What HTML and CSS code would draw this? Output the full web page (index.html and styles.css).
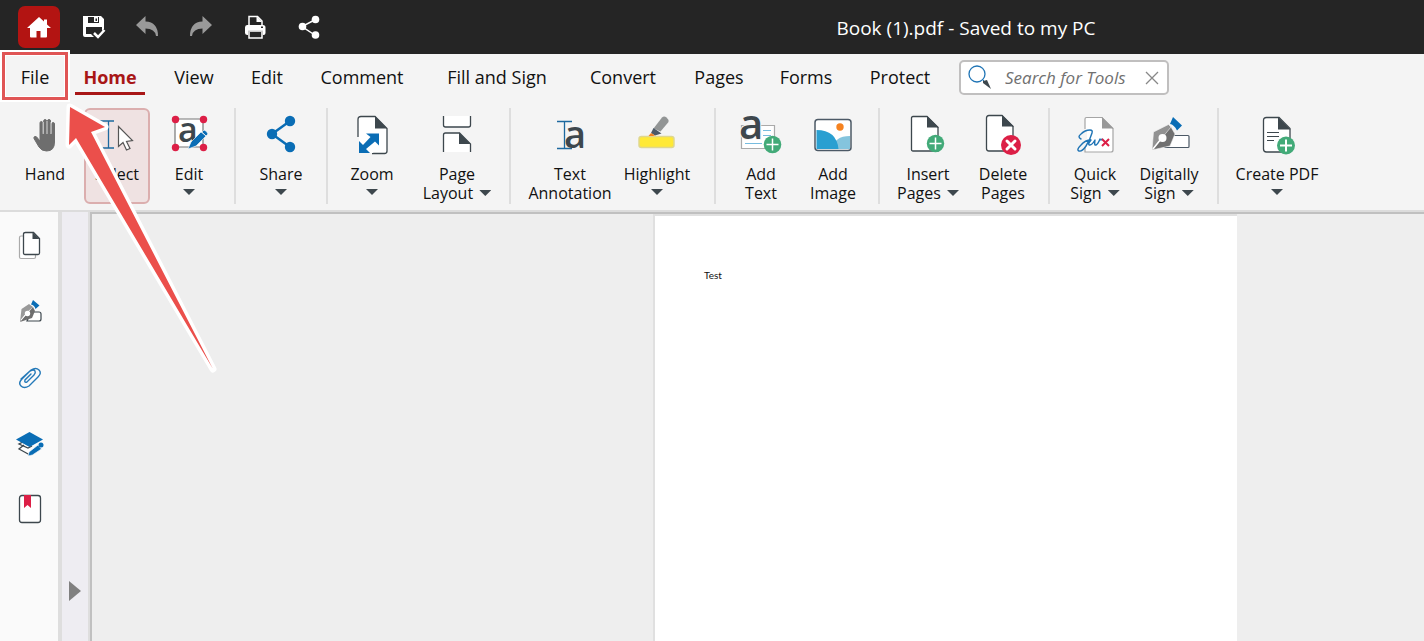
FILE: index.html
```html
<!DOCTYPE html>
<html lang="en">
<head>
  <meta charset="UTF-8" />
  <title>Book (1).pdf</title>
  <link rel="stylesheet" href="styles.css">
</head>
<body>

  <header class="titlebar">
    <div class="quick">
      <button class="quick-btn home" aria-label="Start page">
        <svg width="26" height="26" viewBox="0 0 26 26"><path fill="#fff" d="M13 3 1 14h3v8.500q0 1 1 1h5.500V17h4v6.500H20q1 0 1-1V14h4l-4-3.600V5.500h-3v2.100z"/></svg>
      </button>
      <button class="quick-btn" aria-label="Save">
        <svg width="26" height="26" viewBox="0 0 26 26" fill="none">
          <path fill="#fff" fill-rule="evenodd" d="M3 2h18l3 3v10l-2 2v-4H6v7h5l3 3H5q-2 0-2-2zM8 3v6h11V3z"/>
          <path fill="#fff" d="M14 3h4v5h-4z"/><path fill="#252525" d="M15.500 4.500h1.500v2.500h-1.500z"/>
          <path stroke="#fff" stroke-width="2.500" d="m14 19 4 4 6.500-7"/>
        </svg>
      </button>
      <button class="quick-btn" aria-label="Undo">
        <svg width="26" height="26" viewBox="0 0 26 26"><path fill="#999" d="M2 11 11.500 2v5.500Q24 8 24 22q-1 0-2 0Q21 14.500 11.500 14.500V20z"/></svg>
      </button>
      <button class="quick-btn" aria-label="Redo">
        <svg width="26" height="26" viewBox="0 0 26 26"><path fill="#999" d="M24 11 14.500 2v5.500Q2 8 2 22q1 0 2 0Q5 14.500 14.500 14.500V20z"/></svg>
      </button>
      <button class="quick-btn" aria-label="Print">
        <svg width="26" height="26" viewBox="0 0 26 26">
          <path fill="none" stroke="#fff" stroke-width="1.500" d="M7 12V2.500h8.500L20 7v5"/>
          <path fill="#fff" d="M14.500 2v6H20zM5 11h16q2.500 0 2.500 2.500V19q0 2-2 2H21v-4.500H6V21h-.5q-2.500 0-2.500-2v-5.500Q3 11 5 11z"/>
          <path fill="#252525" d="M19 12.500h2V14h-2z"/>
          <path fill="none" stroke="#fff" stroke-width="1.500" d="M5 17h17M7 18v6h13v-6"/>
        </svg>
      </button>
      <button class="quick-btn" aria-label="Share file">
        <svg width="26" height="26" viewBox="0 0 26 26"><path fill="none" stroke="#fff" stroke-width="1.500" d="M19.500 5.500 6 12.500l13.500 9"/><g fill="#fff"><circle cx="6.500" cy="12.500" r="3.800"/><circle cx="19.500" cy="5.500" r="3.800"/><circle cx="19.500" cy="21" r="3.800"/></g></svg>
      </button>
    </div>
    <div class="title">Book (1).pdf - Saved to my PC</div>
  </header>

  <div class="ribbon">
    <nav class="tabs">
      <button class="tab marked"><span>File</span></button>
      <button class="tab active"><span>Home</span></button>
      <button class="tab"><span>View</span></button>
      <button class="tab"><span>Edit</span></button>
      <button class="tab"><span>Comment</span></button>
      <button class="tab"><span>Fill and Sign</span></button>
      <button class="tab"><span>Convert</span></button>
      <button class="tab"><span>Pages</span></button>
      <button class="tab"><span>Forms</span></button>
      <button class="tab"><span>Protect</span></button>
      <div class="search">
        <svg width="26" height="26" viewBox="0 0 26 26"><circle cx="10" cy="9" r="8" fill="#fff" stroke="#1f74b5" stroke-width="1.300"/><path stroke="#1f74b5" d="m15.500 14.500 2 2"/><path fill="#3d474d" d="m16 16 4-1 4 9-8-6z"/></svg>
        <input type="text" placeholder="Search for Tools" aria-label="Search for Tools">
        <button class="clear" aria-label="Clear"><svg width="14" height="14" viewBox="0 0 14 14"><path stroke="#888" stroke-width="1.300" d="m1 1 12 12M13 1 1 13"/></svg></button>
      </div>
    </nav>

    <div class="tools">
      <div class="group g-select">
        <button class="tool">
          <svg width="48" height="44" viewBox="0 0 48 44"><g transform="translate(1 0)"><path fill="#6e6e6e" stroke="#6e6e6e" stroke-linejoin="round" d="M18 25V10q0-1.500 1.300-1.500T20.700 10v10h1V8q0-1.500 1.400-1.500T24.500 8v12h1V8q0-1.500 1.500-1.500T28.500 8v12.500h1.200V11q0-1.500 1.400-1.500T32.500 11v18q0 9-8 9-5 0-7.500-4l-5-8.500q-.6-1.700 1-2t2.500 1.500l2.500 3z"/><path stroke="#f4f4f4" stroke-width=".8" d="M21.200 9v12M25 8v13M29 9v12"/></g></svg>
          <span class="label">Hand</span>
        </button>
        <button class="tool selected">
          <svg width="48" height="44" viewBox="0 0 48 44"><path fill="none" stroke="#1d699f" stroke-width="1.300" d="M6 8h15M6 35h15M15.500 8v27"/><path fill="#fff" stroke="#555" stroke-width="1.200" d="M25.500 13.500v20l4.500-4 3.500 7.500 3.500-1.500-3.500-7 6-1z"/></svg>
          <span class="label">Select</span>
        </button>
        <button class="tool">
          <svg width="48" height="44" viewBox="0 0 48 44"><path fill="#fff" stroke="#777" stroke-width="1.200" d="M10 6h28v28H10z"/><text class="glyph" x="13" y="29" font-size="34">a</text><path fill="#0a6db5" stroke="#fff" stroke-width=".6" d="m23 36 3-7 10-10 5 4-10 10zM37 19l2-2q3 1 4 4l-2 2z"/><g fill="#dc1f46"><circle cx="10.500" cy="6.500" r="3.700"/><circle cx="38.500" cy="6.500" r="3.700"/><circle cx="10.500" cy="34.500" r="3.700"/><circle cx="38.500" cy="34.500" r="3.700"/></g></svg>
          <span class="label">Edit<i class="drop"></i></span>
        </button>
      </div>

      <div class="group g-share">
        <button class="tool">
          <svg width="48" height="44" viewBox="0 0 48 44"><path fill="none" stroke="#0a6db5" stroke-width="2.500" d="M33 8 15 21l18 13"/><g fill="#0a6db5"><circle cx="15" cy="21" r="5.200"/><circle cx="33" cy="8" r="5.200"/><circle cx="33" cy="34" r="5.200"/></g></svg>
          <span class="label">Share<i class="drop"></i></span>
        </button>
      </div>

      <div class="group g-view">
        <button class="tool">
          <svg width="48" height="44" viewBox="0 0 48 44"><path fill="#fff" stroke="#3d474d" stroke-width="1.300" d="M13 3.500h14l12 12V38q0 2.500-2.500 2.500H13q-3 0-3-3v-31q0-3 3-3z"/><path fill="#3d474d" d="M27 3v12.500h12z"/><path fill="#f4f4f4" d="M8 24h3v10l13 5v3H8z"/><path fill="#fff" d="M10.500 24h5l4-5h13v14l-8 7h-8z"/><path fill="#0a6db5" d="M18 20.500h13v12l-4-4-9 7.500 4 4H11v-12l4 4 7.500-8z"/></svg>
          <span class="label">Zoom<i class="drop"></i></span>
        </button>
        <button class="tool">
          <svg width="48" height="44" viewBox="0 0 48 44"><g fill="#fff" stroke="#3d474d" stroke-width="1.300"><path d="M10.500 3v9q0 2 2 2h23q2 0 2-2V3"/><path d="M10.500 39V22q0-2 2-2h14l11 11v8"/></g><path fill="#3d474d" d="M26 19.500V31h11.500z"/></svg>
          <span class="label">Page<br>Layout <i class="drop beside"></i></span>
        </button>
      </div>

      <div class="group g-note">
        <button class="tool">
          <svg width="48" height="44" viewBox="0 0 48 44"><path stroke="#1d699f" stroke-width="1.300" d="M11 8.500h15M11 35.500h15M18.500 8.500v27"/><text class="glyph" x="18" y="35" font-size="38">a</text></svg>
          <span class="label">Text<br>Annotation</span>
        </button>
        <button class="tool">
          <svg width="48" height="44" viewBox="0 0 48 44"><rect x="6" y="23.500" width="35" height="11" rx="2.500" fill="#ffe936" stroke="#dfd78e" stroke-width="1.500"/><path fill="#929595" d="M20.500 15.500 29 4.500q2-2 4.500 0t2 4.500l-8 9.500z"/><path fill="#4c5966" d="m20.500 15 8 5.500-6.500 2-4-2.500z"/><path fill="#f58220" d="m18 20 4 2.500-2 .5h-4.500z"/></svg>
          <span class="label">Highlight<i class="drop"></i></span>
        </button>
      </div>

      <div class="group g-add">
        <button class="tool">
          <svg width="48" height="44" viewBox="0 0 48 44"><path fill="#fff" stroke="#aaa" stroke-width="1.200" d="M4.500 12.500h33v23h-33z"/><path stroke="#77bcdf" stroke-width="1.200" d="M26 17.500h8M26 22.500h8M8 30.500h17"/><text class="glyph" x="2" y="26" font-size="42" stroke="#f4f4f4" stroke-width="2" paint-order="stroke">a</text><circle cx="35.500" cy="31.500" r="8.800" fill="#42aa78"/><path stroke="#fff" stroke-width="1.500" d="M29.500 31.500h12M35.500 25.500v12"/></svg>
          <span class="label">Add<br>Text</span>
        </button>
        <button class="tool">
          <svg width="48" height="44" viewBox="0 0 48 44"><rect x="6" y="6.500" width="36" height="31" rx="3" fill="#fff" stroke="#4c5966" stroke-width="1.500"/><path fill="#84c4dd" d="M24 36q1-13 17-13v13z"/><path fill="#299fd1" d="M7.500 17q20 0 22 19h-22z"/><circle cx="31" cy="14" r="3.700" fill="#f58220"/></svg>
          <span class="label">Add<br>Image</span>
        </button>
      </div>

      <div class="group g-pages">
        <button class="tool">
          <svg width="48" height="44" viewBox="0 0 48 44"><path fill="#fff" stroke="#3d474d" stroke-width="1.300" d="M9 3.500h14l11 11V38H9q-1.500 0-1.500-1.500V5q0-1.500 1.500-1.500z"/><path fill="#3d474d" d="M23 3v11.500h12z"/><circle cx="31.500" cy="30.500" r="8.700" fill="#42aa78"/><path stroke="#fff" stroke-width="1.500" d="M25.500 30.500h12M31.500 24.500v12"/></svg>
          <span class="label">Insert<br>Pages <i class="drop beside"></i></span>
        </button>
        <button class="tool">
          <svg width="48" height="44" viewBox="0 0 48 44"><path fill="#fff" stroke="#3d474d" stroke-width="1.300" d="M10 2.500h13l11 11V38H10q-2.500 0-2.500-2.500V5q0-2.500 2.500-2.500z"/><path fill="#3d474d" d="M23 2v11.500h12z"/><circle cx="32" cy="32" r="10" fill="#dc1f46"/><path stroke="#fff" stroke-width="3" stroke-linecap="round" d="m28 28 8 8M36 28l-8 8"/></svg>
          <span class="label">Delete<br>Pages</span>
        </button>
      </div>

      <div class="group g-sign">
        <button class="tool">
          <svg width="48" height="44" viewBox="0 0 48 44"><path fill="#fff" stroke="#a5a5a5" stroke-width="1.200" d="M14 39V6q0-1.500 1.500-1.500H31l11 11V37q0 2-2 2z"/><path fill="#999" d="M31 4v11.500h11.500z"/><path fill="#f4f4f4" d="M12 16h4v18h-4z"/><path fill="none" stroke="#1f74b5" stroke-width="1.400" stroke-linecap="round" stroke-linejoin="round" d="M10 26q-4-2 0-5 4-4 9-4 3 0 2 3-2 7-6 13-4 6-7 5t2-6q4-5 10-5-4 5-1 5 2 0 5-5-1 6 1 5t4-6q1 2 2 0"/><path stroke="#dc1f46" stroke-width="2" d="m31 26 7 7M38 26l-7 7"/></svg>
          <span class="label">Quick<br>Sign <i class="drop beside"></i></span>
        </button>
        <button class="tool">
          <svg width="48" height="44" viewBox="0 0 48 44"><path fill="#fff" stroke="#4c5966" stroke-width="1.200" d="M22 22.500h21q1 0 1 1v10q0 1-1 1H20z"/><path fill="#929292" stroke="#f4f4f4" stroke-width=".6" d="M7 37 8.500 19l15-7.500L27 15l-9 9z"/><path fill="#707070" stroke="#f4f4f4" stroke-width=".6" d="m7 37 19-23 4 7-5 12z"/><path stroke="#fff" stroke-width="1.500" d="m8 36 8-10"/><circle cx="17.500" cy="25" r="4" fill="#fff"/><path fill="#0a6db5" d="m28 4 9 8.500-5 5q-3-6-7-6.500z"/></svg>
          <span class="label">Digitally<br>Sign <i class="drop beside"></i></span>
        </button>
      </div>

      <div class="group g-create">
        <button class="tool">
          <svg width="48" height="44" viewBox="0 0 48 44"><path fill="#fff" stroke="#3d474d" stroke-width="1.300" d="M13.500 4.500H26l11 11V39H13.500q-3 0-3-3V7.500q0-3 3-3z"/><path fill="#3d474d" d="M25 4v12.500h12.500z"/><path stroke="#3d474d" stroke-width="1.200" d="M14 19.500h12M14 23.500h12M14 27.500h7"/><circle cx="33" cy="32.500" r="9" fill="#42aa78"/><path stroke="#fff" stroke-width="2" d="M27 32.500h12M33 26.500v12"/></svg>
          <span class="label">Create PDF<i class="drop"></i></span>
        </button>
      </div>
    </div>
  </div>

  <main class="workspace">
    <aside class="sidebar">
      <button aria-label="Page thumbnails"><svg width="30" height="32" viewBox="0 0 30 32"><path fill="#fff" stroke="#aaa" stroke-width="1.200" d="M8 6H6Q4.500 6 4.500 7.500V27q0 1.500 1.500 1.500h13q1.500 0 1.500-1.500v-2"/><path fill="#fff" stroke="#3d474d" stroke-width="1.300" d="M10.500 2.500h8l6 6V23q0 1.500-1.500 1.500H10Q8.500 24.500 8.500 23V4q0-1.500 2-1.500z"/><path fill="#3d474d" d="M17.500 2v7h7z"/></svg></button>
      <button aria-label="Signatures"><svg width="30" height="32" viewBox="0 0 30 32"><path fill="#fff" stroke="#3d474d" stroke-width="1.200" d="M16 16h8q2 0 2 2v5q0 2-2 2H12z"/><path fill="#999" d="M5 26 6.500 13 14 8l4 3-7 6z"/><path fill="#6e6e6e" d="m5 26 13-15 2 4-3 7z"/><path stroke="#fff" d="m6 24 5-6"/><circle cx="12.500" cy="17.500" r="2.700" fill="#fff"/><path fill="#0a6db5" d="m18 4 6.500 5.500-4 3.500q-1-4-4.500-4.500z"/></svg></button>
      <button aria-label="Attachments"><svg width="30" height="32" viewBox="0 0 30 32"><path fill="none" stroke="#2479b8" stroke-width="1.400" stroke-linecap="round" d="m6 17 10-9q5-3 8 0t-1 7l-9 9q-5 3-8 0t1-7l8-8q4-2 5 0t-1 4l-7 7q-3 1-2-2l6-6"/></svg></button>
      <button aria-label="Edit layers"><svg width="30" height="32" viewBox="0 0 30 32"><path fill="#fff" stroke="#3d474d" stroke-width="1.300" d="m12 12-8 4 9 4 4-2M9 17l-5 4 11 6 4-3"/><path fill="#0a6db5" d="M1 11.500 14.500 4 28 11.500 14.500 19z"/><path fill="#0a6db5" stroke="#fafafa" stroke-width=".7" d="m13 28 1-4 9-7 3.500 4-9 6z"/><circle cx="26" cy="17" r="2.500" fill="#0a6db5"/></svg></button>
      <button aria-label="Bookmarks"><svg width="30" height="32" viewBox="0 0 30 32"><rect x="4.500" y="1.500" width="21" height="27" rx="2.500" fill="#fff" stroke="#3d474d" stroke-width="1.300"/><path fill="#dc1f46" d="M9 1h7v13l-3.500-3L9 14z"/></svg></button>
    </aside>
    <div class="splitter"><button class="expand" aria-label="Expand panel"></button></div>
    <section class="canvas">
      <article class="page">Test</article>
    </section>
  </main>

  <svg class="pointer" width="160" height="280" viewBox="0 0 160 280"><path fill="#eb4f4b" stroke="#fff" stroke-width="7" stroke-linejoin="round" paint-order="stroke" d="m10 7 35 20-14 5 122 237L16 38 9 45z"/></svg>

</body>
</html>
```
FILE: styles.css
```css
*,
*::after {
  box-sizing: border-box;
}

body {
  display: flex;
  flex-direction: column;
  position: relative;
  height: 100vh;
  margin: 0;
  overflow: hidden;
  font-family: "Open Sans", "Noto Sans", sans-serif;
  color: #111;
  background-color: #eee;
}

button {
  padding: 0;
  border: none;
  background: none;
  font-family: inherit;
  color: inherit;
  cursor: pointer;
}

svg {
  display: block;
  overflow: visible;
}

/* title bar */
.titlebar {
  display: flex;
  align-items: center;
  height: 54px;
  flex-shrink: 0;
  padding-left: 12px;
  background-color: #252525;
}

.quick {
  display: grid;
  grid-template-columns: repeat(6, 54px);
  justify-items: center;
}

.quick-btn {
  display: flex;
  align-items: center;
  justify-content: center;
  width: 42px;
  height: 42px;
  border-radius: 7px;
}

.home {
  background-color: #b31412;
}

.title {
  flex: 1;
  padding: 2px 0 0 172px;
  text-align: center;
  font-size: 19px;
  color: #fff;
  white-space: nowrap;
}

/* ribbon */
.ribbon {
  flex-shrink: 0;
  background-color: #f4f4f4;
  border-bottom: 2px solid #dcdcdc;
}

.tabs {
  display: grid;
  grid-template-columns: 68px 82px 86px 60px 130px 140px 112px 80px 94px 94px 210px;
  height: 50px;
  padding-left: 1px;
}

.tab {
  display: flex;
  justify-content: center;
  height: 41px;
  font-size: 18px;
  white-space: nowrap;
}

.tab span {
  display: flex;
  align-items: center;
  padding: 8px 8px 0;
  border-bottom: 3px solid transparent;
}

.tab.active span {
  font-weight: bold;
  color: #a81616;
  border-color: #a81616;
}

.tab.marked {
  position: relative;
}

.tab.marked::after {
  content: "";
  position: absolute;
  top: -2px;
  left: 1px;
  width: 66px;
  height: 48px;
  border: 3px solid #e05555;
  box-shadow: 0 0 0 2px #fff, inset 0 0 0 1px #fff;
}

.search {
  display: flex;
  align-items: center;
  height: 35px;
  margin: 6px 0 0 12px;
  width: 210px;
  padding: 0 8px 0 6px;
  border: 2px solid #c0bfbf;
  border-radius: 5px;
  background-color: #fff;
}

.search input {
  flex: 1;
  min-width: 0;
  padding: 0 0 0 12px;
  border: none;
  outline: none;
  background: none;
  font-family: inherit;
  font-size: 17px;
  font-style: italic;
}

.search input::placeholder {
  color: #707070;
}

/* tools */
.tools {
  display: flex;
  padding: 4px 0 6px;
}

.group {
  display: grid;
  border-right: 2px solid #dedede;
}

.g-select {
  grid-template-columns: 78px 66px 78px;
  padding: 0 6px;
}

.g-share {
  grid-template-columns: 90px;
}

.g-view {
  grid-template-columns: 88px 82px;
  padding-right: 11px;
}

.g-note {
  grid-template-columns: 94px 80px;
  padding: 0 17px 0 12px;
}

.g-add {
  grid-template-columns: 72px 72px;
  padding: 0 9px;
}

.g-pages {
  grid-template-columns: 76px 74px;
  padding: 0 8px 0 10px;
}

.g-sign {
  grid-template-columns: 72px 76px;
  padding: 0 10px 0 9px;
}

.g-create {
  grid-template-columns: 116px;
  border-right: none;
}

.tool {
  display: flex;
  flex-direction: column;
  align-items: center;
  height: 96px;
  padding-top: 3px;
  border: 2px solid transparent;
  border-radius: 6px;
}

.tool.selected {
  background-color: #efe2e2;
  border-color: #dbaeae;
}

.label {
  margin-top: 8px;
  font-size: 16px;
  line-height: 19px;
  text-align: center;
  white-space: nowrap;
}

.drop {
  display: block;
  width: 12px;
  height: 6px;
  margin: 5px auto 0;
  background-color: #3d474d;
  clip-path: polygon(0 0, 100% 0, 50% 100%);
}

.drop.beside {
  display: inline-block;
  margin: 0 0 3px 2px;
}

.glyph {
  font-family: "Open Sans", sans-serif;
  font-weight: 600;
  fill: #3d474d;
}

/* workspace */
.workspace {
  display: flex;
  flex: 1;
  min-height: 0;
}

.sidebar {
  display: flex;
  flex-direction: column;
  align-items: center;
  gap: 34px;
  width: 62px;
  padding: 18px 0 0 2px;
  background-color: #fafafa;
  border-right: 4px solid #dedede;
}

.splitter {
  display: flex;
  align-items: flex-end;
  justify-content: center;
  width: 28px;
  padding-bottom: 40px;
  background-color: #eeedf2;
  border-right: 2px solid #dedede;
}

.expand {
  width: 12px;
  height: 20px;
  background-color: #808080;
  clip-path: polygon(0 0, 100% 50%, 0 100%);
}

.canvas {
  flex: 1;
  padding-left: 561px;
  background-color: #eee;
  border-top: 2px solid #c0c0c0;
  border-left: 2px solid #c0c0c0;
}

.page {
  width: 584px;
  height: 100%;
  padding: 53px 49px;
  border-top: 2px solid #e0e0e0;
  border-left: 2px solid #e0e0e0;
  background-color: #fff;
  font-family: Lato, sans-serif;
  font-size: 10px;
  line-height: 12px;
}

.pointer {
  position: absolute;
  top: 100px;
  left: 60px;
  pointer-events: none;
}
```
